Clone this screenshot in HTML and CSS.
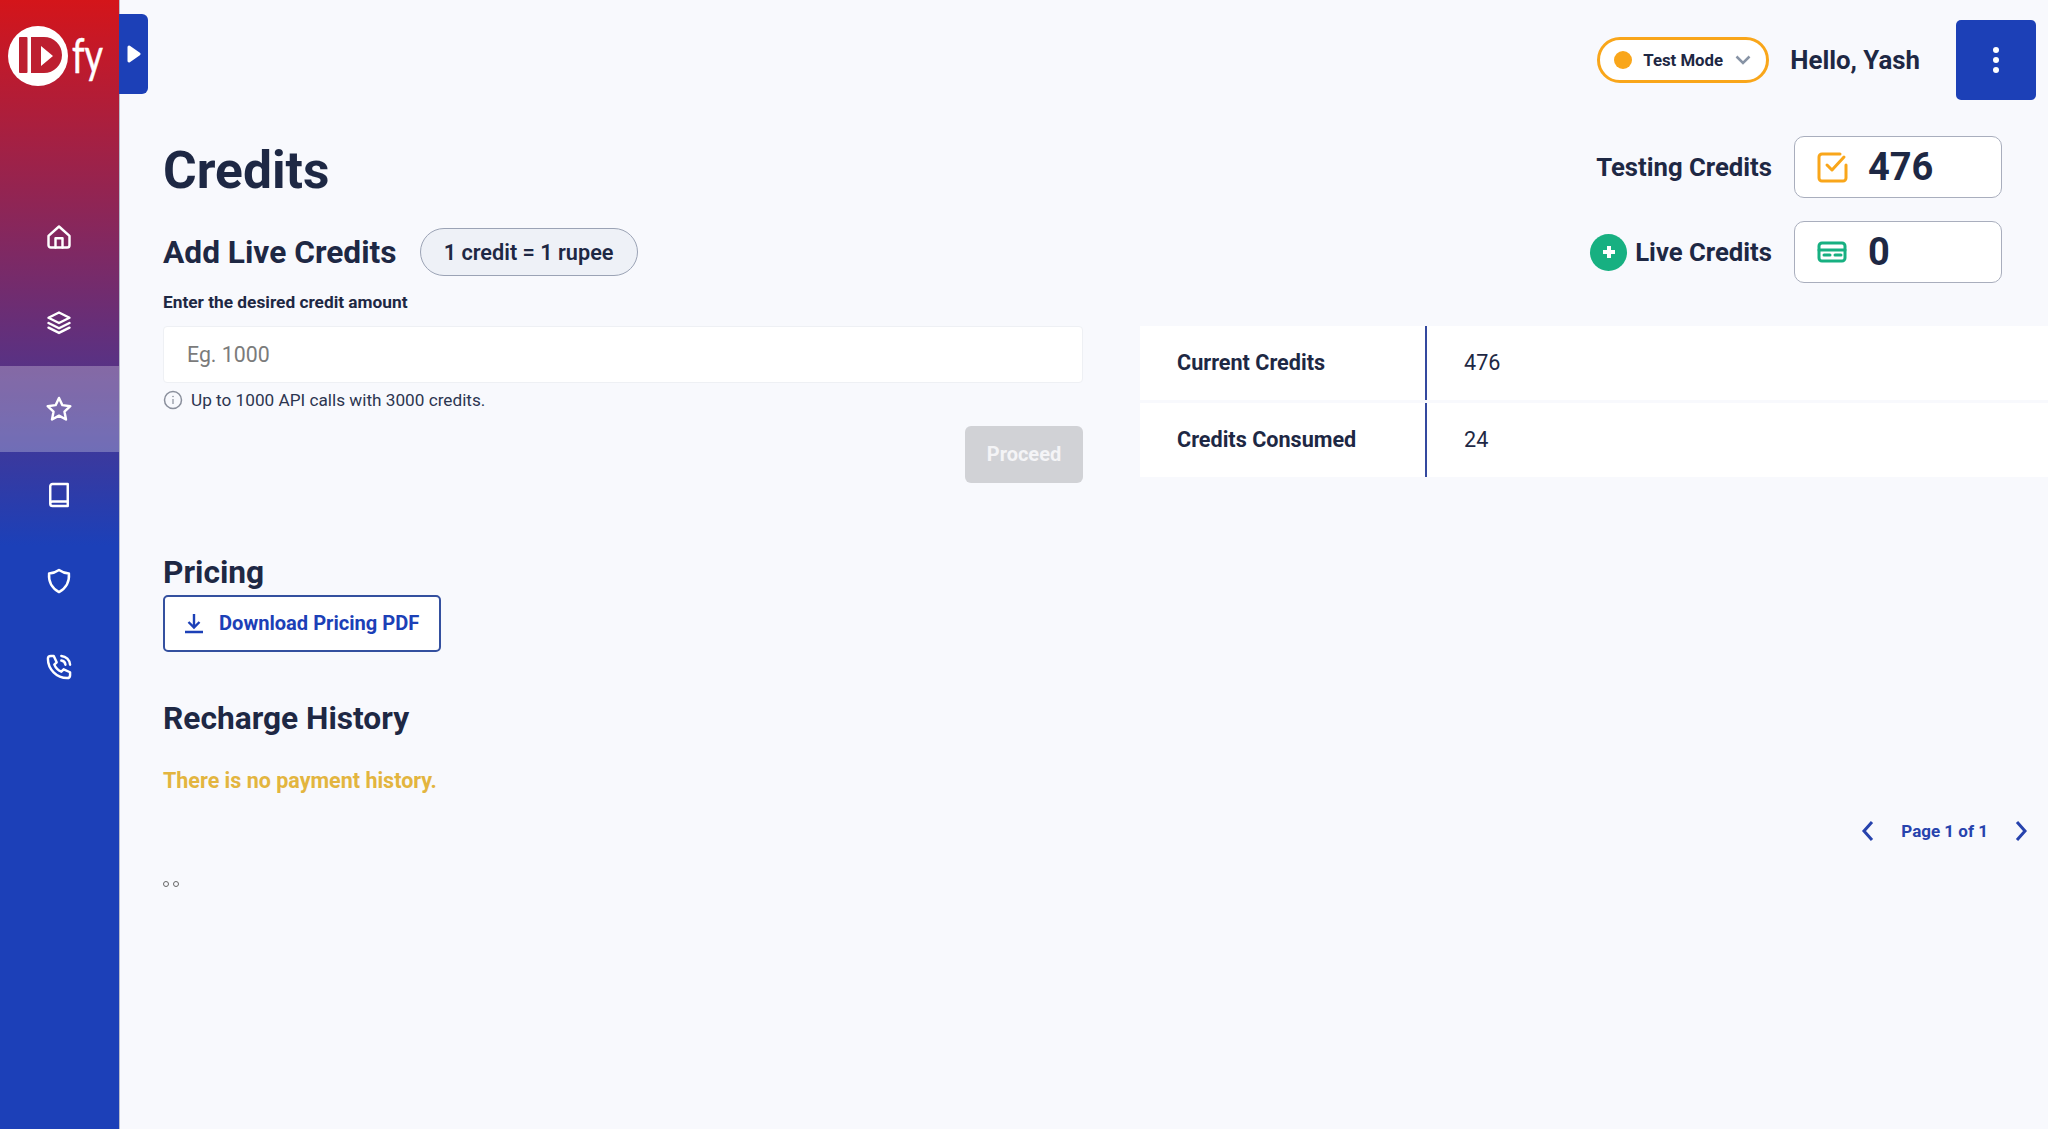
FILE: index.html
```html
<!DOCTYPE html>
<html lang="en">
<head>
<meta charset="utf-8">
<title>Credits</title>
<link rel="stylesheet" href="styles.css">
</head>
<body>
<div class="app">
  <aside class="sidebar">
    <div class="logo">
      <svg width="119" height="100" viewBox="0 0 119 100">
        <circle cx="38" cy="56" r="30" fill="#fff"/>
        <rect x="19" y="37" width="8.5" height="36" rx="1" fill="#bd1f30"/>
        <path fill-rule="evenodd" fill="#bd1f30" d="M31 37h13a18 18 0 0 1 0 36H31zM41 46v20l12-10z"/>
        <text x="72" y="73" class="logo-fy" textLength="31" lengthAdjust="spacingAndGlyphs">fy</text>
      </svg>
    </div>
    <nav class="nav">
      <a class="nav-item"><svg class="nav-icon" viewBox="0 0 24 24"><path d="M3 11 12 3l9 8v8a2 2 0 0 1-2 2H5a2 2 0 0 1-2-2z"/><path d="M9 21v-8h6v8"/></svg></a>
      <a class="nav-item"><svg class="nav-icon" viewBox="0 0 24 24"><path d="m12 3 9 4.500-9 4.500-9-4.500z"/><path d="m3 12 9 4.500 9-4.500"/><path d="m3 16 9 4.500 9-4.500"/></svg></a>
      <a class="nav-item active"><svg class="nav-icon" viewBox="0 0 24 24"><path d="m12 2.500 2.900 6.200 6.800.9-5 4.700 1.300 6.700-6-3.300-6 3.300 1.300-6.700-5-4.700 6.800-.9z"/></svg></a>
      <a class="nav-item"><svg class="nav-icon" viewBox="0 0 24 24"><path d="M19.500 2.500H6.500a2 2 0 0 0-2 2v15a2 2 0 0 0 2 2h13zM4.500 19.500a2 2 0 0 1 2-2h13"/></svg></a>
      <a class="nav-item"><svg class="nav-icon" viewBox="0 0 24 24"><path d="M12 2.500c2.500 1.800 5.300 2.800 8.500 3 .5 6.500-2 12.500-8.500 16-6.500-3.500-9-9.500-8.500-16 3.200-.2 6-1.200 8.500-3z"/></svg></a>
      <a class="nav-item"><svg class="nav-icon" viewBox="0 0 24 24"><path d="M7.500 2.500 10 8 8 10c1 2.500 3.500 5 6 6l2-2 5.500 2.500v2.500c0 1.500-1 2.500-2.500 2.500C10 21.500 2.500 14 2.500 5 2.500 3.500 3.500 2.500 5 2.500z"/><path d="M14 6.500a4 4 0 0 1 3.500 3.500M14 2.500a8 8 0 0 1 7.500 7.500"/></svg></a>
    </nav>
  </aside>
  <button class="toggle" type="button" aria-label="Expand"><svg width="14" height="20" viewBox="0 0 14 20"><path d="M2 3 12 10 2 17z" fill="#fff" stroke="#fff" stroke-width="3" stroke-linejoin="round"/></svg></button>
  <main class="main">
    <header class="topbar">
      <div class="mode-pill">
        <span class="mode-dot"></span>
        <span class="mode-label">Test Mode</span>
        <svg class="mode-caret" width="16" height="10" viewBox="0 0 16 10"><path d="m1.500 1.500 6.500 6.500 6.500-6.500"/></svg>
      </div>
      <span class="hello">Hello, Yash</span>
      <button class="menu-btn" type="button" aria-label="Menu"><span></span><span></span><span></span></button>
    </header>
    <section class="head-row">
      <div class="head-left">
        <h1 class="title">Credits</h1>
        <div class="add-row">
          <h2 class="section-title">Add Live Credits</h2>
          <span class="rate-pill">1 credit = 1 rupee</span>
        </div>
      </div>
      <div class="head-right">
        <div class="credit-row">
          <span class="credit-label">Testing Credits</span>
          <div class="credit-box">
            <svg class="credit-icon" width="32" height="32" viewBox="0 0 32 32"><path d="M24 3H6a3 3 0 0 0-3 3v21a3 3 0 0 0 3 3h21a3 3 0 0 0 3-3V14" stroke="#f9a61a"/><path d="m11 14 5 5 12-13" stroke="#f9a61a"/></svg>
            <span class="credit-num">476</span>
          </div>
        </div>
        <div class="credit-row">
          <span class="plus-btn"><svg width="18" height="18" viewBox="0 0 18 18"><path d="M9 3v12M3 9h12" stroke="#fff" stroke-width="4"/></svg></span>
          <span class="credit-label">Live Credits</span>
          <div class="credit-box">
            <svg class="credit-icon" width="32" height="24" viewBox="0 0 32 24"><rect x="3" y="3" width="26" height="18" rx="3" stroke="#17b081"/><path d="M3 10h26M8 15h6M19 15h6" stroke="#17b081"/></svg>
            <span class="credit-num">0</span>
          </div>
        </div>
      </div>
    </section>
    <section class="form-row">
      <div class="form-col">
        <label class="field-label" for="amount">Enter the desired credit amount</label>
        <input class="amount" id="amount" type="text" placeholder="Eg. 1000">
        <p class="hint">
          <svg width="20" height="20" viewBox="0 0 20 20"><circle cx="10" cy="10" r="8.500" fill="none" stroke="#8a8f9c" stroke-width="1.500"/><path d="M10 9v5" stroke="#8a8f9c" stroke-width="1.200"/><circle cx="10" cy="6.500" r=".8" fill="#8a8f9c"/></svg>
          <span>Up to 1000 API calls with 3000 credits.</span>
        </p>
        <div class="proceed-wrap"><button class="proceed" type="button">Proceed</button></div>
      </div>
      <div class="table-col">
        <div class="stat-row"><span class="stat-key">Current Credits</span><span class="stat-val">476</span></div>
        <div class="stat-row"><span class="stat-key">Credits Consumed</span><span class="stat-val">24</span></div>
      </div>
    </section>
    <h2 class="section-title pricing-title">Pricing</h2>
    <button class="download" type="button">
      <svg width="22" height="22" viewBox="0 0 22 22"><path d="M11 2v13M5.500 10l5.500 5.500 5.500-5.500M2 20h18" fill="none" stroke="#1c40b7" stroke-width="2.400"/></svg>
      <span>Download Pricing PDF</span>
    </button>
    <h2 class="section-title history-title">Recharge History</h2>
    <p class="empty">There is no payment history.</p>
    <div class="pager">
      <svg width="14" height="22" viewBox="0 0 14 22"><path d="M11 2 3 11l8 9"/></svg>
      <span class="pager-text">Page 1 of 1</span>
      <svg width="14" height="22" viewBox="0 0 14 22"><path d="m3 2 8 9-8 9"/></svg>
    </div>
    <div class="dots"><span></span><span></span></div>
  </main>
</div>
</body>
</html>
```
FILE: styles.css
```css
* { box-sizing: border-box; }
html, body { margin: 0; height: 100%; }
body {
  background: #f8f9fd;
  color: #1e2844;
  font-family: Roboto, "Liberation Sans", sans-serif;
  overflow: hidden;
}
.app { display: flex; height: 1129px; position: relative; }
.sidebar {
  width: 120px;
  flex: none;
  background: linear-gradient(180deg, #d4151a 0, #1c40b8 545px);
  border-right: 1px solid #b9bccb;
}
.logo { height: 194px; }
.logo svg { display: block; }
.logo-fy {
  font-family: Lato, sans-serif;
  font-size: 48px;
  fill: #fff;
  stroke: #fff;
  stroke-width: .6;
  font-weight: 400;
}
.nav { display: flex; flex-direction: column; }
.nav-item {
  height: 86px;
  display: flex;
  align-items: center;
  justify-content: center;
  padding-right: 2px;
}
.nav-item.active { background: rgba(255, 255, 255, .27); }
.nav-icon {
  width: 28px;
  height: 28px;
  fill: none;
  stroke: #fff;
  stroke-width: 2.100;
  stroke-linejoin: round;
  stroke-linecap: round;
}
.toggle {
  position: absolute;
  left: 119px;
  top: 14px;
  width: 29px;
  height: 80px;
  padding: 0 0 0 1px;
  border: 0;
  border-radius: 0 6px 6px 0;
  background: #1c40b7;
  display: flex;
  align-items: center;
  justify-content: center;
}
.main { flex: 1; min-width: 0; padding-left: 43px; }
.topbar {
  height: 100px;
  padding: 20px 12px 0 0;
  display: flex;
  align-items: center;
  justify-content: flex-end;
}
.mode-pill {
  width: 172px;
  height: 46px;
  border: 3px solid #f9a61a;
  border-radius: 23px;
  background: #fff;
  display: flex;
  align-items: center;
  padding-left: 14px;
}
.mode-dot { width: 18px; height: 18px; border-radius: 50%; background: #f9a61a; margin-right: 11px; }
.mode-label { font-size: 16.800px; font-weight: 700; }
.mode-caret { margin-left: 12px; fill: none; stroke: #8793a5; stroke-width: 2.500; }
.hello { font-size: 25.800px; font-weight: 700; margin: 0 36px 0 21px; }
.menu-btn {
  width: 80px;
  height: 80px;
  border: 0;
  border-radius: 5px;
  background: #1c40b7;
  display: flex;
  flex-direction: column;
  align-items: center;
  justify-content: center;
  gap: 4px;
  padding: 0;
}
.menu-btn span { width: 6px; height: 6px; border-radius: 50%; background: #fff; }
.head-row {
  margin-top: 36px;
  display: flex;
  justify-content: space-between;
  align-items: flex-start;
  padding-right: 46px;
}
.title { margin: 7px 0 0; font-size: 51.500px; line-height: 56px; font-weight: 700; }
.add-row { display: flex; align-items: center; gap: 23px; margin-top: 29px; }
.add-row .section-title { padding-top: 2px; }
.section-title { margin: 0; font-size: 31.700px; line-height: 36px; font-weight: 700; }
.rate-pill {
  width: 218px;
  height: 48px;
  border: 1.500px solid #9ba3b5;
  border-radius: 24px;
  background: #eef1f7;
  font-size: 21.700px;
  font-weight: 600;
  display: flex;
  align-items: center;
  justify-content: center;
}
.head-right { display: flex; flex-direction: column; gap: 23px; }
.credit-row { display: flex; align-items: center; justify-content: flex-end; }
.credit-label { font-size: 25.700px; font-weight: 700; margin-right: 22px; }
.credit-box {
  width: 208px;
  height: 62px;
  border: 1px solid #a9aebd;
  border-radius: 10px;
  background: #fff;
  display: flex;
  align-items: center;
  padding-left: 21px;
}
.credit-icon { fill: none; stroke-width: 3; stroke-linecap: round; stroke-linejoin: round; flex: none; }
.credit-num { font-size: 38px; font-weight: 700; margin-left: 20px; }
.plus-btn {
  width: 37px;
  height: 37px;
  border-radius: 50%;
  background: #17b081;
  display: flex;
  align-items: center;
  justify-content: center;
  margin-right: 8px;
}
.form-row {
  margin-top: 8px;
  display: grid;
  grid-template-columns: 920px 1fr;
  column-gap: 57px;
}
.field-label { display: block; font-size: 17.300px; line-height: 22px; font-weight: 700; margin-bottom: 13px; }
.amount {
  display: block;
  width: 100%;
  height: 57px;
  border: 1px solid #eef0f4;
  border-radius: 4px;
  background: #fff;
  padding: 0 23px;
  font: 400 21.300px Roboto, sans-serif;
  color: #1e2844;
}
.amount::placeholder { color: #7b7b7b; opacity: 1; }
.hint { margin: 5px 0 0; display: flex; align-items: center; gap: 8px; font-size: 17.200px; line-height: 24px; color: #2c3550; }
.proceed-wrap { margin-top: 14px; display: flex; justify-content: flex-end; }
.proceed {
  width: 118px;
  height: 57px;
  border: 0;
  border-radius: 6px;
  background: #d1d2d6;
  color: #f4f4f6;
  font: 700 20px Roboto, sans-serif;
  padding: 0 0 2px;
}
.table-col { padding-top: 35px; display: flex; flex-direction: column; gap: 3px; }
.stat-row { height: 74px; background: #fff; display: flex; align-items: center; font-size: 21.600px; }
.stat-key {
  width: 287px;
  height: 100%;
  padding: 0 0 1px 37px;
  font-weight: 700;
  display: flex;
  align-items: center;
  border-right: 2px solid #34499f;
}
.stat-val { margin-left: 37px; padding-bottom: 1px; }
.pricing-title { margin-top: 72px; }
.download {
  margin-top: 4px;
  width: 278px;
  height: 57px;
  border: 2px solid #34509f;
  border-radius: 5px;
  background: #fff;
  color: #1c40b7;
  font: 700 20.100px Roboto, sans-serif;
  display: flex;
  align-items: center;
  gap: 14px;
  padding: 0 0 1px 18px;
}
.history-title { margin-top: 49px; }
.empty { margin: 31px 0 0; font-size: 21.500px; line-height: 26px; font-weight: 700; color: #e3b53f; }
.pager {
  margin-top: 22px;
  height: 30px;
  padding-right: 20px;
  display: flex;
  align-items: center;
  justify-content: flex-end;
  color: #2743ad;
}
.pager svg { fill: none; stroke: #2743ad; stroke-width: 3; }
.pager-text { font-size: 17px; font-weight: 700; margin: 0 26px 0 26px; }
.dots { margin-top: 35px; display: flex; gap: 4px; }
.dots span { width: 6px; height: 6px; border: 1.500px solid #666; border-radius: 50%; }
```
